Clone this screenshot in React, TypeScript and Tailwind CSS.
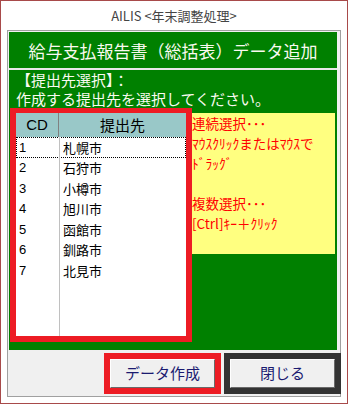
import React from 'react';

const cities = [
  { cd: '1', name: '札幌市' },
  { cd: '2', name: '石狩市' },
  { cd: '3', name: '小樽市' },
  { cd: '4', name: '旭川市' },
  { cd: '5', name: '函館市' },
  { cd: '6', name: '釧路市' },
  { cd: '7', name: '北見市' },
];

const jp = { fontFamily: '"Noto Sans CJK JP", "Liberation Sans", sans-serif' };

const App: React.FC = () => {
  return (
    <div className="w-[348px] h-[404px] border border-[#a84a4a] bg-white flex flex-col" style={jp}>
      {/* title */}
      <div className="h-[29px] flex items-center justify-center text-[13px] text-[#444]">
        AILIS &lt;年末調整処理&gt;
      </div>

      <div className="mx-[6px] mb-[6px] flex-1 border border-[#a0a0a0] bg-[#f0f0f0] pt-px pl-px flex flex-col">
        <div className="bg-[#008000] mr-[3px] flex flex-col">
          <div className="h-[36px] flex items-center justify-center text-[17px] text-[#fafaf0] leading-none">
            給与支払報告書（総括表）データ追加
          </div>
          <div className="h-[2px] bg-[#e8e8e8]" />

          <div className="h-[280px] flex flex-col">
            <div className="pl-[7px] text-[15px] leading-[19px] text-[#fafaf0]">
              <div>【提出先選択】：</div>
              <div>作成する提出先を選択してください。</div>
            </div>

            <div className="flex items-start pl-px">
              {/* list */}
              <div className="w-[182px] h-[234px] border-x-[6px] border-t-[5px] border-b-[6px] border-[#ed1c24] bg-white flex flex-col">
                <div className="h-[24px] flex bg-[#99c8c8] text-[15px] text-black">
                  <div className="w-[43px] flex items-center justify-center border-r border-[#808080]" style={{ fontFamily: '"Liberation Sans", sans-serif' }}>CD</div>
                  <div className="flex-1 flex items-center justify-center">提出先</div>
                </div>
                <div className="flex-1 relative">
                  <div className="absolute left-[43px] top-0 bottom-0 w-px bg-[#c0c0c0]" />
                  {cities.map((c, i) => (
                    <div
                      key={c.cd}
                      className={`h-[20.5px] flex items-center text-[13px] text-black ${i === 0 ? 'border border-dotted border-black' : 'border border-transparent'}`}
                    >
                      <div className="w-[43px] pl-[2px]" style={{ fontFamily: '"Liberation Sans", sans-serif' }}>{c.cd}</div>
                      <div className="pl-[3px]">{c.name}</div>
                    </div>
                  ))}
                </div>
              </div>

              {/* hint */}
              <div className="w-[143px] h-[141px] mt-[5px] bg-[#ffff80] text-[#ff0000] text-[13.5px] leading-[20px]">
                <div>連続選択･･･</div>
                <div className="whitespace-nowrap">ﾏｳｽｸﾘｯｸまたはﾏｳｽで</div>
                <div>ﾄﾞﾗｯｸﾞ</div>
                <div>&nbsp;</div>
                <div>複数選択･･･</div>
                <div>[Ctrl]ｷｰ＋ｸﾘｯｸ</div>
              </div>
            </div>
          </div>
        </div>

        {/* buttons */}
        <div className="flex-1 flex items-center justify-end gap-[3px] -mr-px">
          <div className="w-[117px] h-[41px] bg-[#ed1c24] p-[6px] flex">
            <button className="flex-1 bg-[#f0f0f0] border border-t-white border-l-white border-r-[#696969] border-b-[#696969] text-[15px] text-[#1a1a70]">
              データ作成
            </button>
          </div>
          <div className="w-[117px] h-[41px] bg-[#333333] p-[6px] flex">
            <button className="flex-1 bg-[#f0f0f0] border border-t-white border-l-white border-r-[#696969] border-b-[#696969] text-[15px] text-[#1a1a70]">
              閉じる
            </button>
          </div>
        </div>
      </div>
    </div>
  );
};

export default App;
